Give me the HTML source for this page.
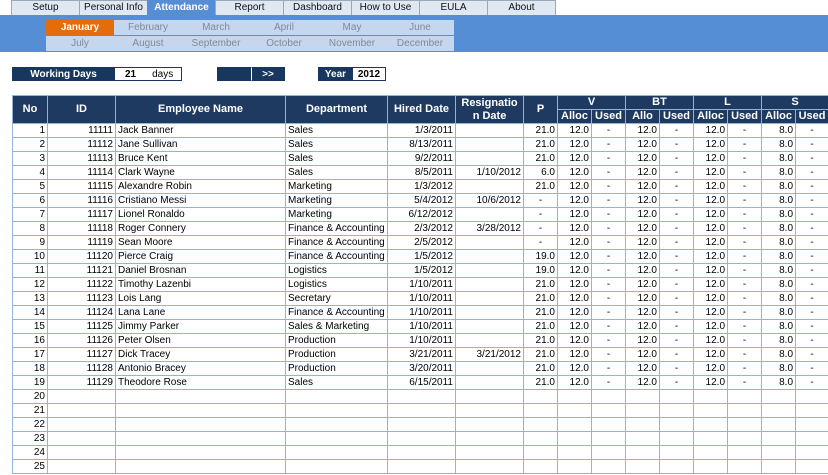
<!DOCTYPE html>
<html><head><style>
body{margin:0;width:828px;height:475px;overflow:hidden;background:#fff;font-family:"Liberation Sans",sans-serif;font-size:10px;position:relative}
.tabs{position:absolute;left:12px;top:0;height:15px;display:flex}
.tabs div{width:67px;height:14px;border:1px solid #9aa8b8;border-bottom:none;margin-left:-1px;background:#dfe8f3;text-align:center;line-height:14px;font-size:10px;color:#111}
.tabs div.on{background:#558ed5;color:#fff;font-weight:bold;border-color:#558ed5}
.band{position:absolute;left:0;top:15px;width:828px;height:37px;background:#558ed5}
.months{position:absolute;left:46px;top:20px;width:408px}
.months div{float:left;width:68px;height:15px;line-height:15px;text-align:center;background:#c5d7ee;color:#7f8a99;font-size:10px}
.months .r2{margin-top:1px}
.months div.sel{background:#e46c0a;color:#fff;font-weight:bold}
.box{position:absolute;top:67px;height:14px;line-height:14px;font-size:10px;box-sizing:border-box}
.dk{background:#17375e;color:#fff;font-weight:bold;text-align:center;border:1px solid #17375e}
.wh{background:#fff;border:1px solid #17375e;color:#000}
table{position:absolute;left:12px;top:95px;border-collapse:collapse;table-layout:fixed;width:816px}
td,th{border:1px solid #95b3d7;height:13px;padding:0 2px;font-size:10px;line-height:13px;white-space:nowrap;overflow:hidden}
th{background:#1f3a60;color:#fff;font-weight:bold;border-color:#95b3d7;text-align:center;font-size:11px}
td.r{text-align:right}td.c{text-align:center}
</style></head><body>
<div class="tabs"><div>Setup</div><div>Personal Info</div><div class="on">Attendance</div><div>Report</div><div>Dashboard</div><div>How to Use</div><div>EULA</div><div>About</div></div>
<div class="band"></div>
<div class="months">
<div class="sel">January</div><div>February</div><div>March</div><div>April</div><div>May</div><div>June</div>
<div class="r2">July</div><div class="r2">August</div><div class="r2">September</div><div class="r2">October</div><div class="r2">November</div><div class="r2">December</div>
</div>
<div class="box dk" style="left:12px;width:103px">Working Days</div>
<div class="box wh" style="left:114px;width:68px"><b style="margin-left:10px">21</b><span style="margin-left:16px">days</span></div>
<div class="box dk" style="left:217px;width:35px"></div>
<div class="box dk" style="left:251px;width:34px;border-left:1px solid #fff">&gt;&gt;</div>
<div class="box dk" style="left:318px;width:35px">Year</div>
<div class="box wh" style="left:352px;width:34px;font-weight:bold;text-align:center">2012</div>
<table>
<colgroup><col style="width:35px"><col style="width:68px"><col style="width:170px"><col style="width:102px"><col style="width:68px"><col style="width:68px"><col style="width:34px"><col style="width:34px"><col style="width:34px"><col style="width:34px"><col style="width:34px"><col style="width:34px"><col style="width:34px"><col style="width:34px"><col style="width:33px"></colgroup>
<tr><th rowspan="2">No</th><th rowspan="2">ID</th><th rowspan="2">Employee Name</th><th rowspan="2">Department</th><th rowspan="2">Hired Date</th><th rowspan="2">Resignatio<br>n Date</th><th rowspan="2">P</th><th colspan="2">V</th><th colspan="2">BT</th><th colspan="2">L</th><th colspan="2">S</th></tr>
<tr><th>Alloc</th><th>Used</th><th>Allo</th><th>Used</th><th>Alloc</th><th>Used</th><th>Alloc</th><th>Used</th></tr>
<tr><td class="r">1</td><td class="r">11111</td><td>Jack Banner</td><td>Sales</td><td class="r">1/3/2011</td><td></td><td class="r">21.0</td><td class="r">12.0</td><td class="c">-</td><td class="r">12.0</td><td class="c">-</td><td class="r">12.0</td><td class="c">-</td><td class="r">8.0</td><td class="c">-</td></tr>
<tr><td class="r">2</td><td class="r">11112</td><td>Jane Sullivan</td><td>Sales</td><td class="r">8/13/2011</td><td></td><td class="r">21.0</td><td class="r">12.0</td><td class="c">-</td><td class="r">12.0</td><td class="c">-</td><td class="r">12.0</td><td class="c">-</td><td class="r">8.0</td><td class="c">-</td></tr>
<tr><td class="r">3</td><td class="r">11113</td><td>Bruce Kent</td><td>Sales</td><td class="r">9/2/2011</td><td></td><td class="r">21.0</td><td class="r">12.0</td><td class="c">-</td><td class="r">12.0</td><td class="c">-</td><td class="r">12.0</td><td class="c">-</td><td class="r">8.0</td><td class="c">-</td></tr>
<tr><td class="r">4</td><td class="r">11114</td><td>Clark Wayne</td><td>Sales</td><td class="r">8/5/2011</td><td class="r">1/10/2012</td><td class="r">6.0</td><td class="r">12.0</td><td class="c">-</td><td class="r">12.0</td><td class="c">-</td><td class="r">12.0</td><td class="c">-</td><td class="r">8.0</td><td class="c">-</td></tr>
<tr><td class="r">5</td><td class="r">11115</td><td>Alexandre Robin</td><td>Marketing</td><td class="r">1/3/2012</td><td></td><td class="r">21.0</td><td class="r">12.0</td><td class="c">-</td><td class="r">12.0</td><td class="c">-</td><td class="r">12.0</td><td class="c">-</td><td class="r">8.0</td><td class="c">-</td></tr>
<tr><td class="r">6</td><td class="r">11116</td><td>Cristiano Messi</td><td>Marketing</td><td class="r">5/4/2012</td><td class="r">10/6/2012</td><td class="c">-</td><td class="r">12.0</td><td class="c">-</td><td class="r">12.0</td><td class="c">-</td><td class="r">12.0</td><td class="c">-</td><td class="r">8.0</td><td class="c">-</td></tr>
<tr><td class="r">7</td><td class="r">11117</td><td>Lionel Ronaldo</td><td>Marketing</td><td class="r">6/12/2012</td><td></td><td class="c">-</td><td class="r">12.0</td><td class="c">-</td><td class="r">12.0</td><td class="c">-</td><td class="r">12.0</td><td class="c">-</td><td class="r">8.0</td><td class="c">-</td></tr>
<tr><td class="r">8</td><td class="r">11118</td><td>Roger Connery</td><td>Finance &amp; Accounting</td><td class="r">2/3/2012</td><td class="r">3/28/2012</td><td class="c">-</td><td class="r">12.0</td><td class="c">-</td><td class="r">12.0</td><td class="c">-</td><td class="r">12.0</td><td class="c">-</td><td class="r">8.0</td><td class="c">-</td></tr>
<tr><td class="r">9</td><td class="r">11119</td><td>Sean Moore</td><td>Finance &amp; Accounting</td><td class="r">2/5/2012</td><td></td><td class="c">-</td><td class="r">12.0</td><td class="c">-</td><td class="r">12.0</td><td class="c">-</td><td class="r">12.0</td><td class="c">-</td><td class="r">8.0</td><td class="c">-</td></tr>
<tr><td class="r">10</td><td class="r">11120</td><td>Pierce Craig</td><td>Finance &amp; Accounting</td><td class="r">1/5/2012</td><td></td><td class="r">19.0</td><td class="r">12.0</td><td class="c">-</td><td class="r">12.0</td><td class="c">-</td><td class="r">12.0</td><td class="c">-</td><td class="r">8.0</td><td class="c">-</td></tr>
<tr><td class="r">11</td><td class="r">11121</td><td>Daniel Brosnan</td><td>Logistics</td><td class="r">1/5/2012</td><td></td><td class="r">19.0</td><td class="r">12.0</td><td class="c">-</td><td class="r">12.0</td><td class="c">-</td><td class="r">12.0</td><td class="c">-</td><td class="r">8.0</td><td class="c">-</td></tr>
<tr><td class="r">12</td><td class="r">11122</td><td>Timothy Lazenbi</td><td>Logistics</td><td class="r">1/10/2011</td><td></td><td class="r">21.0</td><td class="r">12.0</td><td class="c">-</td><td class="r">12.0</td><td class="c">-</td><td class="r">12.0</td><td class="c">-</td><td class="r">8.0</td><td class="c">-</td></tr>
<tr><td class="r">13</td><td class="r">11123</td><td>Lois Lang</td><td>Secretary</td><td class="r">1/10/2011</td><td></td><td class="r">21.0</td><td class="r">12.0</td><td class="c">-</td><td class="r">12.0</td><td class="c">-</td><td class="r">12.0</td><td class="c">-</td><td class="r">8.0</td><td class="c">-</td></tr>
<tr><td class="r">14</td><td class="r">11124</td><td>Lana Lane</td><td>Finance &amp; Accounting</td><td class="r">1/10/2011</td><td></td><td class="r">21.0</td><td class="r">12.0</td><td class="c">-</td><td class="r">12.0</td><td class="c">-</td><td class="r">12.0</td><td class="c">-</td><td class="r">8.0</td><td class="c">-</td></tr>
<tr><td class="r">15</td><td class="r">11125</td><td>Jimmy Parker</td><td>Sales &amp; Marketing</td><td class="r">1/10/2011</td><td></td><td class="r">21.0</td><td class="r">12.0</td><td class="c">-</td><td class="r">12.0</td><td class="c">-</td><td class="r">12.0</td><td class="c">-</td><td class="r">8.0</td><td class="c">-</td></tr>
<tr><td class="r">16</td><td class="r">11126</td><td>Peter Olsen</td><td>Production</td><td class="r">1/10/2011</td><td></td><td class="r">21.0</td><td class="r">12.0</td><td class="c">-</td><td class="r">12.0</td><td class="c">-</td><td class="r">12.0</td><td class="c">-</td><td class="r">8.0</td><td class="c">-</td></tr>
<tr><td class="r">17</td><td class="r">11127</td><td>Dick Tracey</td><td>Production</td><td class="r">3/21/2011</td><td class="r">3/21/2012</td><td class="r">21.0</td><td class="r">12.0</td><td class="c">-</td><td class="r">12.0</td><td class="c">-</td><td class="r">12.0</td><td class="c">-</td><td class="r">8.0</td><td class="c">-</td></tr>
<tr><td class="r">18</td><td class="r">11128</td><td>Antonio Bracey</td><td>Production</td><td class="r">3/20/2011</td><td></td><td class="r">21.0</td><td class="r">12.0</td><td class="c">-</td><td class="r">12.0</td><td class="c">-</td><td class="r">12.0</td><td class="c">-</td><td class="r">8.0</td><td class="c">-</td></tr>
<tr><td class="r">19</td><td class="r">11129</td><td>Theodore Rose</td><td>Sales</td><td class="r">6/15/2011</td><td></td><td class="r">21.0</td><td class="r">12.0</td><td class="c">-</td><td class="r">12.0</td><td class="c">-</td><td class="r">12.0</td><td class="c">-</td><td class="r">8.0</td><td class="c">-</td></tr>
<tr><td class="r">20</td><td></td><td></td><td></td><td></td><td></td><td></td><td></td><td></td><td></td><td></td><td></td><td></td><td></td><td></td></tr>
<tr><td class="r">21</td><td></td><td></td><td></td><td></td><td></td><td></td><td></td><td></td><td></td><td></td><td></td><td></td><td></td><td></td></tr>
<tr><td class="r">22</td><td></td><td></td><td></td><td></td><td></td><td></td><td></td><td></td><td></td><td></td><td></td><td></td><td></td><td></td></tr>
<tr><td class="r">23</td><td></td><td></td><td></td><td></td><td></td><td></td><td></td><td></td><td></td><td></td><td></td><td></td><td></td><td></td></tr>
<tr><td class="r">24</td><td></td><td></td><td></td><td></td><td></td><td></td><td></td><td></td><td></td><td></td><td></td><td></td><td></td><td></td></tr>
<tr><td class="r">25</td><td></td><td></td><td></td><td></td><td></td><td></td><td></td><td></td><td></td><td></td><td></td><td></td><td></td><td></td></tr>
</table>
</body></html>
